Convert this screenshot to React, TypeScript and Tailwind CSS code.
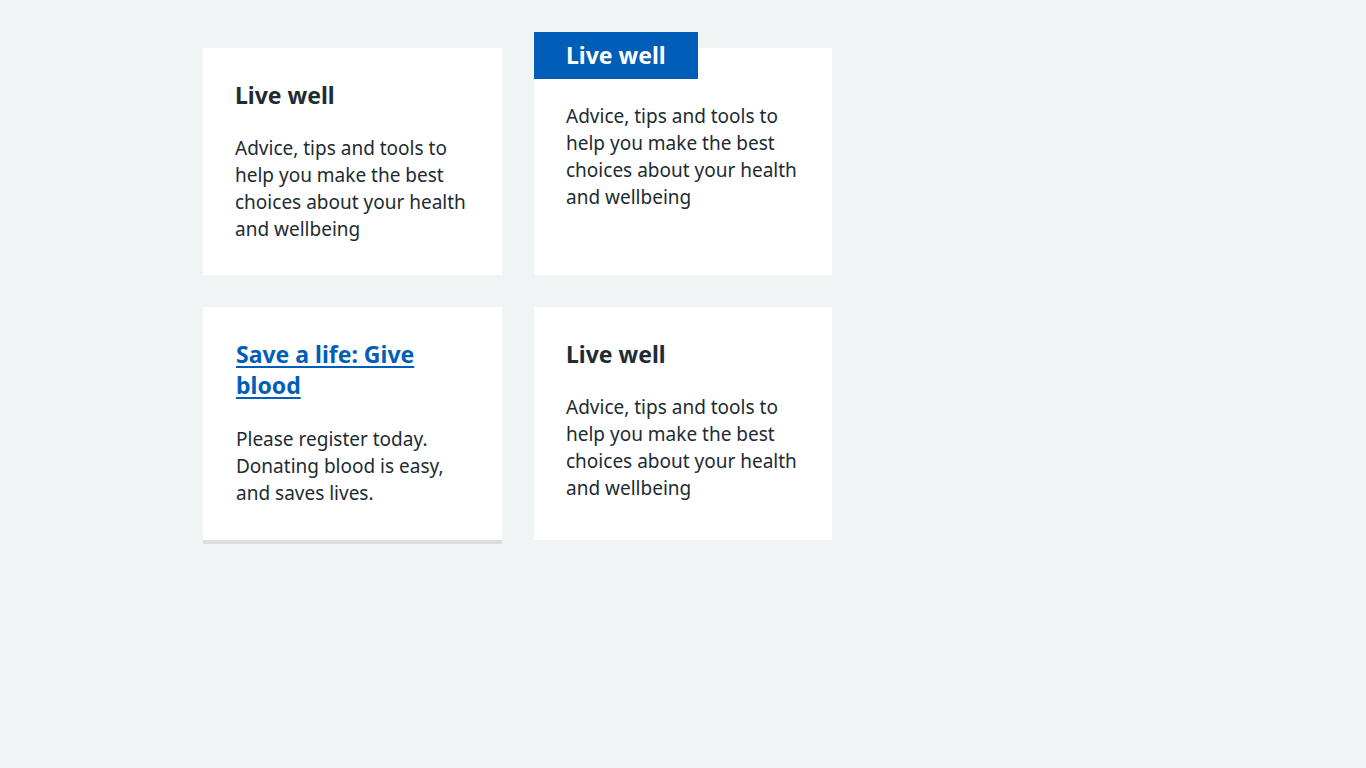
import React from "react";

const para = "Advice, tips and tools to help you make the best choices about your health and wellbeing";

export default function App() {
  return (
    <div
      className="min-h-screen bg-[#f0f4f5] text-[#212b32]"
      style={{ fontFamily: '"Noto Sans", "Open Sans", Arial, sans-serif' }}
    >
      <div className="pt-[48px] pl-[203px] flex flex-col gap-[32px]">
        <div className="flex gap-[32px] items-stretch">
          <div className="w-[299px] bg-white px-[32px] pt-[31px] pb-[32px]">
            <h3 className="text-[23px] leading-[32px] font-bold mb-[24px]">Live well</h3>
            <p className="text-[19px] leading-[27px]">{para}</p>
          </div>
          <div className="w-[298px] bg-white px-[32px] pb-[32px]">
            <h3 className="-mt-[16px] -ml-[32px] w-fit bg-[#005eb8] text-white text-[23px] leading-[32px] font-bold px-[32px] pt-[7px] pb-[8px]">
              Live well
            </h3>
            <p className="text-[19px] leading-[27px] mt-[24px]">{para}</p>
          </div>
        </div>
        <div className="flex gap-[32px] items-start">
          <div className="w-[299px] h-[237px] bg-white border-b-[4px] border-[#d8dde0] pl-[33px] pr-[32px] pt-[32px]">
            <h3 className="text-[23px] leading-[31px] font-bold mb-[25px]">
              <a
                href="#"
                className="text-[#005eb8] underline decoration-[2px] underline-offset-[3px]"
              >
                Save a life: Give blood
              </a>
            </h3>
            <p className="text-[19px] leading-[27px]">
              Please register today. Donating blood is easy, and saves lives.
            </p>
          </div>
          <div className="w-[298px] h-[233px] bg-white px-[32px] pt-[31px]">
            <h3 className="text-[23px] leading-[32px] font-bold mb-[24px]">Live well</h3>
            <p className="text-[19px] leading-[27px]">{para}</p>
          </div>
        </div>
      </div>
    </div>
  );
}
